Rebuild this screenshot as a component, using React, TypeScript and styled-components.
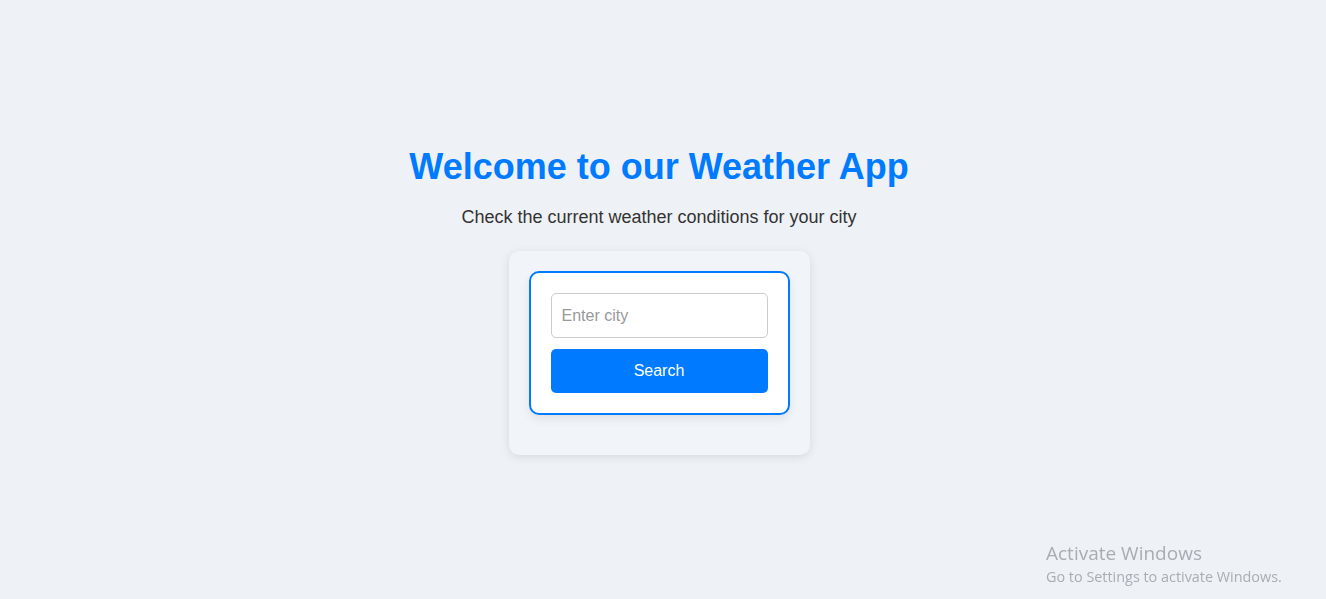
import React from "react";
import styled, { createGlobalStyle } from "styled-components";

const GlobalStyle = createGlobalStyle`
  html, body {
    margin: 0;
    padding: 0;
    background: #eef1f6;
    font-family: "Liberation Sans", Arial, sans-serif;
  }
`;

const Page = styled.div`
  box-sizing: border-box;
  min-height: 100vh;
  padding: 2px 8px 0 0;
  display: flex;
  flex-direction: column;
  align-items: center;
  justify-content: center;
  text-align: center;
`;

const Title = styled.h1`
  margin: 0 0 19px;
  font-size: 36px;
  font-weight: bold;
  color: #007bff;
`;

const Subtitle = styled.p`
  margin: 0 0 23px;
  font-size: 18px;
  color: #333;
`;

const Card = styled.div`
  width: 261px;
  padding: 20px 20px 40px;
  background: #f1f4f9;
  border-radius: 10px;
  box-shadow: 0 2px 10px rgba(0, 0, 0, 0.1);
`;

const Form = styled.form`
  display: flex;
  flex-direction: column;
  gap: 11px;
  padding: 20px;
  background: #fff;
  border: 2px solid #007bff;
  border-radius: 10px;
  box-shadow: 0 4px 10px rgba(0, 0, 0, 0.08);
`;

const CityInput = styled.input`
  box-sizing: border-box;
  width: 100%;
  height: 45px;
  padding: 0 10px;
  border: 1px solid #ccc;
  border-radius: 5px;
  font-family: "Liberation Sans", Arial, sans-serif;
  font-size: 16px;
  outline: none;

  &::placeholder {
    color: #999;
  }
`;

const SearchButton = styled.button`
  height: 44px;
  border: none;
  border-radius: 5px;
  background: #007bff;
  color: #fff;
  font-family: "Liberation Sans", Arial, sans-serif;
  font-size: 16px;
  cursor: pointer;
`;

const Watermark = styled.div`
  position: fixed;
  left: 1046px;
  top: 541px;
  font-family: "Open Sans", "Noto Sans", sans-serif;
  color: #a9adb3;
  text-align: left;
  pointer-events: none;
`;

const WatermarkTitle = styled.div`
  font-size: 19px;
  line-height: 25px;
`;

const WatermarkText = styled.div`
  font-size: 14.4px;
  line-height: 21px;
`;

export default function App() {
  return (
    <>
      <GlobalStyle />
      <Page>
        <Title>Welcome to our Weather App</Title>
        <Subtitle>Check the current weather conditions for your city</Subtitle>
        <Card>
          <Form onSubmit={(e) => e.preventDefault()}>
            <CityInput type="text" placeholder="Enter city" />
            <SearchButton type="submit">Search</SearchButton>
          </Form>
        </Card>
      </Page>
      <Watermark>
        <WatermarkTitle>Activate Windows</WatermarkTitle>
        <WatermarkText>Go to Settings to activate Windows.</WatermarkText>
      </Watermark>
    </>
  );
}
